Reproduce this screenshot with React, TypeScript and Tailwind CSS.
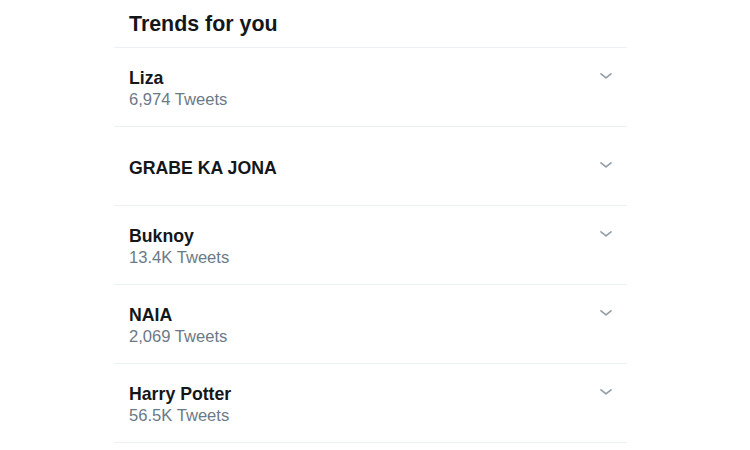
import React from "react";

const trends = [
  { name: "Liza", count: "6,974 Tweets" },
  { name: "GRABE KA JONA", count: null },
  { name: "Buknoy", count: "13.4K Tweets" },
  { name: "NAIA", count: "2,069 Tweets" },
  { name: "Harry Potter", count: "56.5K Tweets" },
];

function Chevron() {
  return (
    <svg width="14" height="8" viewBox="0 0 14 8" fill="none">
      <path d="M2 1.8 L7 5.8 L12 1.8" stroke="#939ea7" strokeWidth="1.7" strokeLinecap="round" strokeLinejoin="round" />
    </svg>
  );
}

export default function App() {
  return (
    <div className="w-[750px] h-[450px] bg-white overflow-hidden" style={{ fontFamily: '"Liberation Sans", Arial, sans-serif' }}>
      <div className="ml-[114px] w-[513px] flex flex-col">
        <div className="h-[48px] flex items-center pl-[15px] pt-[2px] border-b border-[#edf0f2]">
          <h2 className="text-[21.4px] font-bold text-[#14171a] leading-none">Trends for you</h2>
        </div>
        {trends.map((t) => (
          <div key={t.name} className="h-[79px] flex items-center justify-between pl-[15px] pr-[14px] pt-[3px] border-b border-[#edf0f2]">
            <div className="flex flex-col gap-[3px]">
              <div className="text-[17.7px] font-bold text-[#14171a] leading-[20px]">{t.name}</div>
              {t.count && <div className="text-[16.6px] text-[#6b7a86] leading-[18px]">{t.count}</div>}
            </div>
            <div className={t.count ? "self-start mt-[21px]" : "self-start mt-[31px]"}>
              <Chevron />
            </div>
          </div>
        ))}
      </div>
    </div>
  );
}
